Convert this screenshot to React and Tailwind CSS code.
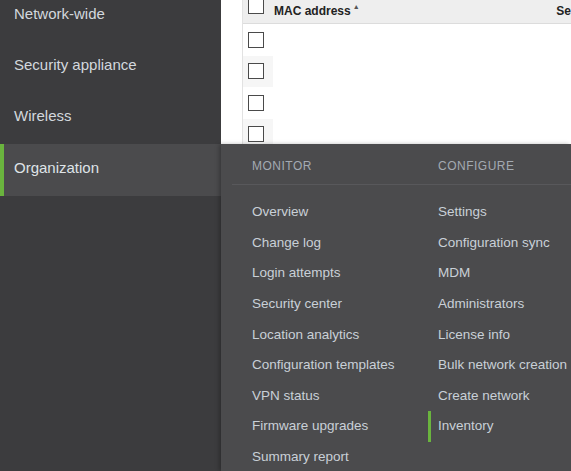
import React from 'react';

const sideItems = ['Network-wide', 'Security appliance', 'Wireless'];

const monitor = [
  'Overview',
  'Change log',
  'Login attempts',
  'Security center',
  'Location analytics',
  'Configuration templates',
  'VPN status',
  'Firmware upgrades',
  'Summary report',
];

const configure = [
  'Settings',
  'Configuration sync',
  'MDM',
  'Administrators',
  'License info',
  'Bulk network creation',
  'Create network',
  'Inventory',
];

function Checkbox() {
  return <span className="block w-4 h-4 border-[1.5px] border-[#4a4a4a] bg-white" />;
}

export default function App() {
  return (
    <div
      className="relative w-[571px] h-[471px] overflow-hidden flex bg-white"
      style={{ fontFamily: '"Liberation Sans", Arial, sans-serif' }}
    >
      {/* Left nav */}
      <div className="w-[221px] shrink-0 bg-[#3c3c3e] flex flex-col">
        <div className="-mt-[10px]">
          {sideItems.map((s) => (
            <div key={s} className="h-[51.3px] flex items-center pb-[3px] pl-[14px] text-[15px] text-[#d3d8dd]">
              {s}
            </div>
          ))}
          <div className="h-[52px] flex items-center pb-[3px] pl-[10px] border-l-4 border-[#6ab43e] bg-[#4b4b4d] text-[15px] text-[#dfe3e7]">
            Organization
          </div>
        </div>
      </div>

      {/* Content behind */}
      <div className="flex-1 pl-[21px]">
        <div className="border-l border-[#e2e2e2] h-full">
          <div className="h-6 bg-[#eeeeee] border-b border-[#dcdcdc] flex items-center pb-[2px] relative">
            <div className="absolute left-[5px] -top-[2px]">
              <Checkbox />
            </div>
            <span className="ml-[31px] text-[12px] font-bold text-[#222]">MAC address</span>
            <span className="text-[7px] ml-[2px] -mt-[6px] text-[#555]">▲</span>
            <span className="ml-auto text-[12px] font-bold text-[#222]">Se</span>
          </div>
          {[0, 1, 2, 3].map((i) => (
            <div key={i} className="h-[31.5px] flex items-center">
              <div className={`h-full w-[30px] flex items-center pl-[5px] ${i % 2 ? 'bg-[#f6f6f6]' : ''}`}>
                <Checkbox />
              </div>
            </div>
          ))}
        </div>
      </div>

      {/* Flyout menu */}
      <div className="absolute left-[221px] top-[144px] right-0 bottom-0 bg-[#4b4b4d] shadow-[-2px_0_4px_rgba(0,0,0,0.25)]">
        <div className="h-[41px] ml-[11px] pt-[4px] border-b border-[#58585b] flex items-center text-[12px] tracking-[0.5px] text-[#a3aab2]">
          <span className="ml-[20px] w-[186px]">MONITOR</span>
          <span>CONFIGURE</span>
        </div>
        <div className="flex pt-[12px] text-[13.5px] text-[#c9d0d7]">
          <div className="w-[207px] pl-[31px]">
            {monitor.map((m) => (
              <div key={m} className="h-[30.6px] flex items-center whitespace-nowrap">
                {m}
              </div>
            ))}
          </div>
          <div>
            {configure.map((c) => (
              <div
                key={c}
                className={`h-[30.6px] flex items-center whitespace-nowrap pl-[7px] border-l-[3px] ${
                  c === 'Inventory' ? 'border-[#6ab43e]' : 'border-transparent'
                }`}
              >
                {c}
              </div>
            ))}
          </div>
        </div>
      </div>
    </div>
  );
}
